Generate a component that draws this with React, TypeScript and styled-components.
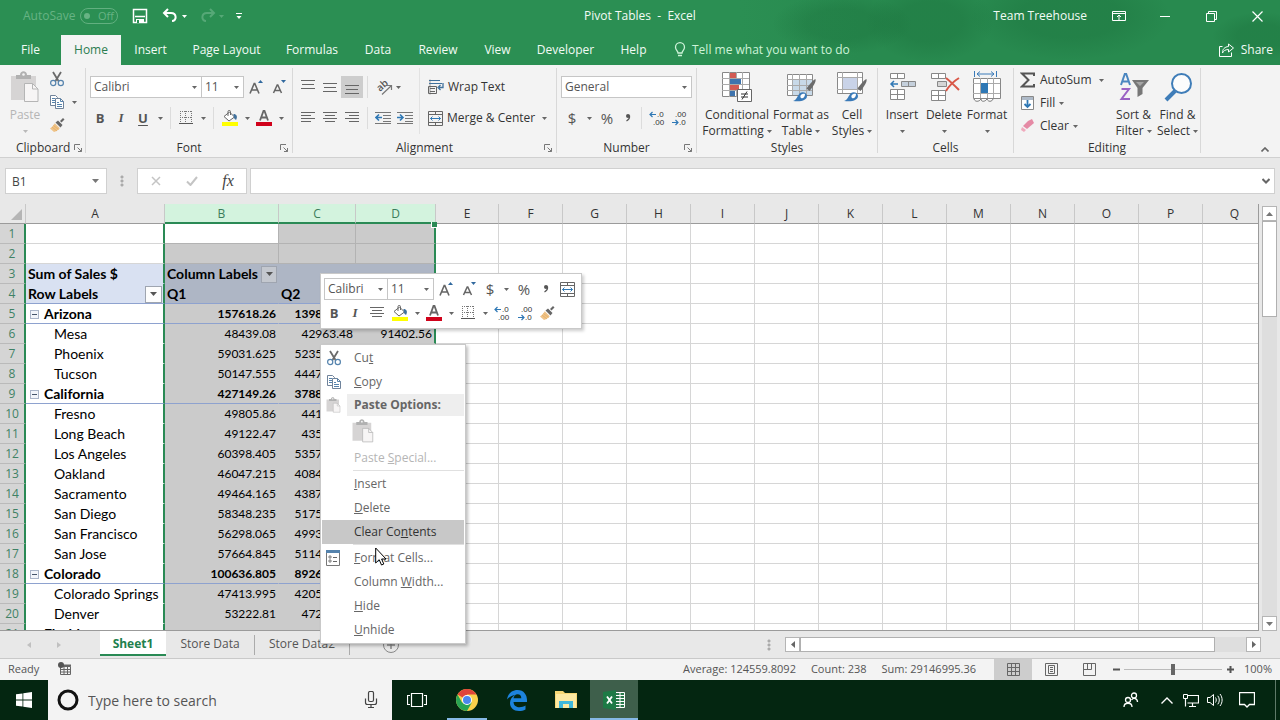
import React from "react";
import styled, { createGlobalStyle, css } from "styled-components";

const UI = `"Open Sans", "Noto Sans", sans-serif`;
const CELL = `Lato, "Open Sans", sans-serif`;

const Global = createGlobalStyle`
  * { box-sizing: border-box; }
  body { margin: 0; font: 12px/16px ${UI}; color: #333; background: #e8e8e8; }
  button, input, select { font: inherit; color: inherit; margin: 0; }
  svg { display: block; flex: none; }
`;

/* ---------- shared parts ---------- */

const Window = styled.div`
  position: relative;
  display: flex;
  flex-direction: column;
  height: 100vh;
  min-height: 480px;
  overflow: hidden;
`;

const plain = css`
  display: flex;
  align-items: center;
  justify-content: center;
  padding: 0;
  border: 0;
  background: none;
  white-space: nowrap;
`;

const IconButton = styled.button<{ $w?: number; $h?: number; $on?: boolean }>`
  ${plain}
  flex: none;
  width: ${(p) => p.$w ?? 22}px;
  height: ${(p) => p.$h ?? 22}px;
  background: ${(p) => (p.$on ? "#cdcdcd" : "none")};
`;

const Spacer = styled.div`
  flex: 1;
`;

type IconProps = { w: number; h: number; vb?: string; children: React.ReactNode };
const Icon = ({ w, h, vb, children }: IconProps) => (
  <svg width={w} height={h} viewBox={vb ?? `0 0 ${w} ${h}`} fill="none" aria-hidden="true">
    {children}
  </svg>
);

const Caret = ({ color = "#666" }: { color?: string }) => (
  <Icon w={5} h={3}>
    <path d="M0 0h5L2.500 3z" fill={color} />
  </Icon>
);

/* ---------- icons ---------- */

const CutIcon = () => (
  <Icon w={16} h={16}>
    <path d="M4 1l5.500 9M12 1L6.500 10" stroke="#6a6a6a" strokeWidth="1.800" />
    <circle cx="4.200" cy="12" r="2.600" stroke="#5583ad" strokeWidth="1.200" />
    <circle cx="11.800" cy="12" r="2.600" stroke="#5583ad" strokeWidth="1.200" />
  </Icon>
);

const CopyIcon = () => (
  <Icon w={16} h={16}>
    <path d="M1.500 1.500h5l2 2v8h-7z" fill="#fff" stroke="#70839a" />
    <path d="M3 4.500h3M3 6.500h3M3 8.500h3" stroke="#5583ad" />
    <path d="M6.500 4.500h5l3 3v7h-8z" fill="#fff" stroke="#70839a" />
    <path d="M11.500 4.500v3h3M8 8.500h2M8 10.500h5M8 12.500h5" stroke="#5583ad" />
  </Icon>
);

const BrushIcon = () => (
  <Icon w={16} h={16}>
    <path d="M11 4l3-3 1.500 1.500-3 3z" fill="#666" />
    <path d="M6.500 5.500l2.500-2 4.500 4.500-2 2.500z" fill="#666" />
    <path d="M5.800 6.200l5 5c-2 2-4 3.500-5.800 3.800L1 11.500c1.800-1.300 3.500-3 4.800-5.300z" fill="#efc388" />
    <path d="M3 10l5 4M4.500 8.500l5 4" stroke="#e3a95b" strokeWidth=".7" />
  </Icon>
);

const PasteIcon = ({ w = 28, h = 32 }: { w?: number; h?: number }) => (
  <Icon w={w} h={h} vb="0 0 28 32">
    <path d="M0 5h25v24H0z" fill="#d6d4d4" />
    <path d="M5 8V4h4c0-5 7-5 7 0h4v4z" fill="#b1b1b1" />
    <circle cx="12.500" cy="3.500" r="1.300" fill="#f3f3f3" />
    <path d="M13.500 12.500h8l5.500 5.500v12.500H13.500z" fill="#f7f5f5" stroke="#b5b5b5" />
    <path d="M21.500 12.500V18H27" stroke="#b5b5b5" />
  </Icon>
);

const GrowIcon = ({ shrink = false }: { shrink?: boolean }) => (
  <Icon w={16} h={16}>
    {shrink ? (
      <path d="M1.500 14L5.200 6h.6L9.500 14M3 11.500h5" stroke="#666" strokeWidth="1.500" />
    ) : (
      <path d="M1 14.500L5.200 4.500h.6l4.200 10M2.800 11h5.500" stroke="#666" strokeWidth="1.600" />
    )}
    {shrink ? <path d="M9 1h5l-2.500 3z" fill="#31699e" /> : <path d="M9 4h5l-2.500-3z" fill="#31699e" />}
  </Icon>
);

const BordersIcon = () => (
  <Icon w={14} h={14}>
    <path d="M1.500 0v12M6.500 0v12M12.500 0v12" stroke="#777" strokeDasharray="1 1" />
    <path d="M1 .5h12M1 6.500h12" stroke="#777" strokeDasharray="1 1" />
    <path d="M0 12.500h14" stroke="#555" />
  </Icon>
);

const FillIcon = () => (
  <Icon w={16} h={16}>
    <path d="M2 6.500L7.500 2l5 5L7 11z" fill="#fff" stroke="#666" />
    <path d="M6 6V1.500C6 0 8.500 0 8.500 1.500V5" stroke="#666" />
    <path d="M11.500 4c3 0 4.500 2.500 2.500 6-1.500-1-2.500-2-2.500-6z" fill="#41719c" />
    <path d="M0 12h16v4H0z" fill="#ff0" />
  </Icon>
);

const FontColorIcon = () => (
  <Icon w={16} h={16}>
    <path d="M4 10.500L7.500 1h1L12 10.500M5 7.500h6" stroke="#666" strokeWidth="1.800" />
    <path d="M0 12h16v4H0z" fill="#d0021b" />
  </Icon>
);

const LinesIcon = ({ ys, kind }: { ys: number[]; kind: "even" | "left" | "center" | "right" }) => (
  <Icon w={14} h={14}>
    {ys.map((y, i) => {
      const short = i % 2 === 1;
      const a = short ? { even: 1, left: 0, center: 2, right: 4 }[kind] : 0;
      const b = short ? { even: 13, left: 10, center: 12, right: 14 }[kind] : 14;
      return <path key={y} d={`M${a} ${y}.5H${b}`} stroke="#666" />;
    })}
  </Icon>
);

const OrientIcon = () => (
  <Icon w={20} h={20}>
    <text transform="translate(7 15) rotate(-42)" fontSize="10" fontWeight="600" fontFamily="Open Sans" fill="#555">
      ab
    </text>
    <path d="M9 17.500L18 9M14 8.500h4.500V13" stroke="#777" strokeWidth="1.200" />
  </Icon>
);

const IndentIcon = ({ out = false }: { out?: boolean }) => (
  <Icon w={16} h={14}>
    <path d="M0 1.500h16M8 4.500h8M8 7.500h8M0 12.500h16M8 10.500h8" stroke="#777" />
    {out ? (
      <path d="M7 6.500H2M4 3.500l-3 3 3 3" stroke="#2f78b5" strokeWidth="1.600" />
    ) : (
      <path d="M0 6.500h5M3 3.500l3 3-3 3" stroke="#2f78b5" strokeWidth="1.600" />
    )}
  </Icon>
);

const WrapIcon = () => (
  <Icon w={16} h={16}>
    <path d="M2 .5v15" stroke="#999" />
    <path d="M1 1.500h11M1 4.500h13" stroke="#41719c" />
    <path d="M.5 7.500h8v7h-8zM2 9.500h5M2 12.500h5" stroke="#666" />
    <path d="M15 4v4.500h-4M12.500 6l-2.500 2.500 2.500 2.500" stroke="#41719c" strokeWidth="1.300" />
  </Icon>
);

const MergeIcon = () => (
  <Icon w={15} h={15}>
    <path d="M.5.500h14v14H.5zM.5 3.500h14M.5 11.500h14M7.500.500v3M7.500 11.500v3" stroke="#666" />
    <path d="M2.500 7.500h10M4.500 5.500l-2 2 2 2M10.500 5.500l2 2-2 2" stroke="#2f78b5" />
  </Icon>
);

const CommaIcon = () => (
  <Icon w={6} h={10}>
    <circle cx="3" cy="3" r="2" fill="#555" />
    <path d="M4.500 2.500c.5 2.500-.5 4-3 5.500" stroke="#555" strokeWidth="1.200" />
  </Icon>
);

const DecimalIcon = ({ less = false }: { less?: boolean }) => (
  <Icon w={18} h={18}>
    <text x={less ? 5 : 9} y="8" fontSize="8" fontFamily="Liberation Sans" fill="#333">
      {less ? ".00" : ".0"}
    </text>
    <text x={less ? 9 : 5} y="16" fontSize="8" fontFamily="Liberation Sans" fill="#333">
      {less ? ".0" : ".00"}
    </text>
    {less ? (
      <path d="M2 13.500h6M5.500 11l2.500 2.500L5.500 16" stroke="#2f78b5" strokeWidth="1.200" />
    ) : (
      <path d="M8 5.500H2M4.500 3L2 5.500 4.500 8" stroke="#2f78b5" strokeWidth="1.200" />
    )}
  </Icon>
);

const ConditionalIcon = () => (
  <Icon w={32} h={32}>
    <path d="M1.500 1.500h27v24h-27z" fill="#fff" stroke="#888" />
    <path d="M1 7.500h27M1 13.500h27M1 19.500h27M8.500 1v25M15.500 1v25M21.500 1v25" stroke="#aaa" />
    <path d="M9 2h6v5H9zM9 14h9v5H9z" fill="#d35b54" />
    <path d="M9 8h11v5H9zM9 20h5v5H9z" fill="#3f74ae" />
    <path d="M16.500 18.500h14v12h-14z" fill="#fff" stroke="#666" />
    <path d="M20 23h7M20 26h7M26 20.500l-5 8" stroke="#333" />
  </Icon>
);

const TableBrush = ({ cell = false }: { cell?: boolean }) => (
  <Icon w={32} h={32}>
    <path d={cell ? "M1.500 1.500h25v21h-25z" : "M2.500 3.500h25v21h-25z"} fill="#fff" stroke="#888" />
    {cell ? (
      <path d="M6 6h16v12H6z" fill="#c9d3e8" />
    ) : (
      <path d="M8 9h19v15H8z" fill="#c8d9e8" />
    )}
    <path
      d={cell ? "M1 6.500h25M1 18.500h25M6.500 1v21M21.500 1v21" : "M2 8.500h25M2 14.500h25M2 19.500h25M7.500 3v21M14.500 3v21M21.500 3v21"}
      stroke="#aaa"
    />
    <path d="M30.500 8c.8 3-2 7-6 12l-3-2.500C25 13 28 9 30.500 8z" fill="#6b6b6b" />
    <path d="M8 30c4-1 4-5 7-8 3-2 7 0 7 3 0 4-5 6-14 5z" fill="#3a7ab8" />
    <path d="M16 27c-2-2 1-5 4-4 0 3-2 5-4 4z" fill="#fff" />
  </Icon>
);

const InsertIcon = () => (
  <Icon w={32} h={32}>
    <path d="M4.500 2.500h14v5h-14zM4.500 18.500h14v10h-14zM4.500 23.500h14M11.500 18.500v10M11.500 2.500v5" fill="#fff" stroke="#888" />
    <path d="M15.500 10.500h14v5h-14zM22.500 10.500v5" fill="#c5d0dc" stroke="#888" />
    <path d="M12 13H5M8 10l-3 3 3 3" stroke="#2f78b5" strokeWidth="1.500" />
  </Icon>
);

const DeleteIcon = () => (
  <Icon w={32} h={32}>
    <path d="M3.500 2.500h14v5h-14zM3.500 19.500h14v10h-14zM3.500 24.500h14M10.500 19.500v10M10.500 2.500v5" fill="#fff" stroke="#888" />
    <path d="M9.500 10.500h9v5h-9z" fill="#d5d5d5" stroke="#888" />
    <path d="M18 7c5 4 9 8 13 12M31 7c-5 3-10 8-13 13" stroke="#d95848" strokeWidth="2" />
  </Icon>
);

const FormatIcon = () => (
  <Icon w={30} h={32}>
    <path d="M2.500 0v6M24.500 0v6M5 3h17M8 .5L5 3l3 2.500M19 .5L22 3l-3 2.500" stroke="#3a7ab8" />
    <path d="M1.500 7.500h27v20h-27z" fill="#fff" stroke="#888" />
    <path d="M1 12.500h27M1 22.500h27M8.500 7v20M15.500 7v20M21.500 7v20" stroke="#aaa" />
    <path d="M9 12h7v10H9z" fill="#2f78b5" />
    <path d="M2 28c1 3 5 3 7 0 0 3 4 3 6 0 1 3 5 3 6 0" fill="#fff" stroke="#777" />
  </Icon>
);

const SortIcon = () => (
  <Icon w={30} h={32}>
    <path d="M2 14L5.800 3h1.400L11 14M3.200 10.500h6.600" stroke="#4a86c0" strokeWidth="2" />
    <path d="M2.500 18h7.500L2.500 28H11" stroke="#9a62c4" strokeWidth="2" />
    <path d="M13 9h17l-6.500 8v6l-5 3v-9z" fill="#777" />
    <path d="M17 11h8l-4 4z" fill="#a5a5a5" />
  </Icon>
);

const FindIcon = () => (
  <Icon w={30} h={32}>
    <path d="M3 29l9-9" stroke="#3f7db8" strokeWidth="4" />
    <circle cx="18.500" cy="12.500" r="9.500" fill="#fcfcfc" stroke="#3f7db8" strokeWidth="2" />
  </Icon>
);

/* ---------- title bar and tabs ---------- */

const Top = styled.header`
  flex: none;
  color: #f2fbf5;
  background:
    radial-gradient(ellipse 70px 30px at 842px 24px, rgba(20, 100, 50, 0.24) 50%, transparent 100%),
    radial-gradient(ellipse 64px 40px at 930px 22px, rgba(20, 100, 50, 0.24) 50%, transparent 100%),
    radial-gradient(ellipse 100px 44px at 1070px 16px, rgba(20, 100, 50, 0.24) 50%, transparent 100%),
    radial-gradient(ellipse 50px 24px at 1262px 36px, rgba(20, 100, 50, 0.24) 50%, transparent 100%),
    linear-gradient(90deg, #2b8f53 0, #2b8f53 740px, #288a4f 860px, #288a4f 100%);
`;

const TitleBar = styled.div`
  display: grid;
  grid-template-columns: 1fr auto 1fr;
  align-items: center;
  height: 35px;
  padding-bottom: 3px;
`;

const QuickBar = styled.div`
  display: flex;
  align-items: center;
  padding-left: 23px;
`;

const AutoSave = styled.span`
  width: 57px;
  color: #67b384;
`;

const Toggle = styled.button`
  ${plain}
  gap: 8px;
  width: 38px;
  height: 16px;
  margin-right: 9px;
  border: 1px solid #62b080;
  border-radius: 8px;
  color: #67b384;
  font-size: 11px;
`;

const Dot = styled.i`
  width: 6px;
  height: 6px;
  border-radius: 50%;
  background: #67b384;
`;

const Title = styled.h1`
  margin: 0;
  font: inherit;
  white-space: pre;
`;

const WindowBar = styled.div`
  display: flex;
  align-items: center;
  justify-content: flex-end;
`;

const User = styled.span`
  margin-right: 9px;
`;

const TabBar = styled.nav`
  display: flex;
  align-items: stretch;
  height: 30px;
`;

const Tab = styled.button<{ $w: number; $on?: boolean }>`
  ${plain}
  width: ${(p) => p.$w}px;
  ${(p) => p.$on && "background: #f3f3f3; color: #2b7d50;"}
`;

const TabAction = styled.button<{ $dim?: boolean }>`
  ${plain}
  gap: 6px;
  margin-left: 14px;
  margin-right: 7px;
  color: ${(p) => (p.$dim ? "#cdf3d8" : "#f2fbf5")};
`;

const tabs: [string, number][] = [
  ["File", 61], ["Home", 60], ["Insert", 59], ["Page Layout", 93], ["Formulas", 78], ["Data", 54],
  ["Review", 66], ["View", 53], ["Developer", 83], ["Help", 53],
];

const Header = () => (
  <Top>
    <TitleBar>
      <QuickBar>
        <AutoSave>AutoSave</AutoSave>
        <Toggle aria-label="AutoSave">
          <Dot />
          Off
        </Toggle>
        <IconButton $w={26} aria-label="Save">
          <Icon w={16} h={16}>
            <path d="M1.500 1.500h13v13h-13z" stroke="#fff" strokeWidth="1.500" />
            <path d="M3 8.500h10" stroke="#fff" strokeWidth="1.500" />
            <path d="M4 11h8v4H4z" fill="#fff" />
            <path d="M5 12h2v3H5z" fill="#2b8f53" />
          </Icon>
        </IconButton>
        <IconButton $w={42} aria-label="Undo">
          <Icon w={25} h={16}>
            <path d="M2 5h7c6 0 6 8 1 8M6 1L2 5l4 4" stroke="#fff" strokeWidth="2" />
            <path d="M20 7h5l-2.500 3z" fill="#fff" />
          </Icon>
        </IconButton>
        <IconButton $w={32} aria-label="Redo">
          <Icon w={25} h={16}>
            <path d="M14 5H8c-6 0-6 8-1 8M11 1l4 4-4 4" stroke="#56a877" strokeWidth="2" />
            <path d="M20 7h5l-2.500 3z" fill="#56a877" />
          </Icon>
        </IconButton>
        <IconButton $w={24} aria-label="Customize">
          <Icon w={8} h={8}>
            <path d="M1 1.500h6" stroke="#fff" />
            <path d="M1.500 4h5L4 7z" fill="#fff" />
          </Icon>
        </IconButton>
      </QuickBar>
      <Title>{"Pivot Tables  -  Excel"}</Title>
      <WindowBar>
        <User>Team Treehouse</User>
        <IconButton $w={46} aria-label="Ribbon options">
          <Icon w={14} h={12}>
            <path d="M.5 1.500h13v9H.5zM.5 3.500h13M7 10V5M5 7l2-2 2 2" stroke="#fff" />
          </Icon>
        </IconButton>
        <IconButton $w={46} aria-label="Minimize">
          <Icon w={10} h={10}>
            <path d="M0 5.500h10" stroke="#fff" />
          </Icon>
        </IconButton>
        <IconButton $w={46} aria-label="Restore">
          <Icon w={11} h={11}>
            <path d="M.5 2.500h8v8h-8zM2.500 2.500v-2h8v8h-2" stroke="#fff" />
          </Icon>
        </IconButton>
        <IconButton $w={46} aria-label="Close">
          <Icon w={11} h={11}>
            <path d="M.5.500l10 10M10.500.500l-10 10" stroke="#fff" strokeWidth="1.200" />
          </Icon>
        </IconButton>
      </WindowBar>
    </TitleBar>
    <TabBar>
      {tabs.map(([name, w]) => (
        <Tab key={name} $w={w} $on={name === "Home"}>
          {name}
        </Tab>
      ))}
      <TabAction $dim>
        <Icon w={12} h={16}>
          <path d="M4 11C4 9 1.500 8 1.500 5.200a4.500 4.500 0 019 0C10.500 8 8 9 8 11zM4 13.500h4" stroke="#cdf3d8" strokeWidth="1.300" />
        </Icon>
        Tell me what you want to do
      </TabAction>
      <Spacer />
      <TabAction>
        <Icon w={16} h={14}>
          <path d="M3.500 3.500h-3v10h12v-4" stroke="#fff" />
          <path d="M9.500 1l5 4-5 4V6.500C6 6.500 4.500 8 3.500 10c0-4 2-6 6-6.500z" stroke="#fff" />
        </Icon>
        Share
      </TabAction>
    </TabBar>
  </Top>
);

/* ---------- ribbon ---------- */

const RibbonBar = styled.section`
  display: flex;
  flex: none;
  height: 93px;
  padding-top: 3px;
  background: #f3f3f3;
  border-bottom: 1px solid #d0d0d0;
`;

const GroupBox = styled.div<{ $w: number }>`
  display: flex;
  flex-direction: column;
  flex: none;
  width: ${(p) => p.$w}px;
  border-right: 1px solid #d8d8d8;
  margin-bottom: 4px;
`;

const GroupBody = styled.div<{ $pad?: number }>`
  display: flex;
  flex: none;
  height: 72px;
  padding-left: ${(p) => p.$pad ?? 4}px;
`;

const GroupFoot = styled.div`
  display: grid;
  grid-template-columns: 16px 1fr 16px;
  align-items: center;
  height: 18px;
  text-align: center;
`;

const Launcher = () => (
  <IconButton $w={16} $h={16} aria-label="More options">
    <Icon w={8} h={8}>
      <path d="M.5 6V.5H6M3.500 3.500l4 4M7.500 4v3.500H4" stroke="#777" />
    </Icon>
  </IconButton>
);

const Group = ({ name, w, pad, launch, children }: { name: string; w: number; pad?: number; launch?: boolean; children: React.ReactNode }) => (
  <GroupBox $w={w}>
    <GroupBody $pad={pad}>{children}</GroupBody>
    <GroupFoot>
      <span />
      <span>{name}</span>
      {launch && <Launcher />}
    </GroupFoot>
  </GroupBox>
);

const Stack = styled.div<{ $gap?: number; $top?: number }>`
  display: flex;
  flex-direction: column;
  align-items: flex-start;
  gap: ${(p) => p.$gap ?? 9}px;
  padding-top: ${(p) => p.$top ?? 8}px;
`;

const Line = styled.div`
  display: flex;
  align-items: center;
  height: 22px;
`;

const Rule = styled.i<{ $m?: number }>`
  width: 1px;
  height: 22px;
  margin: 0 ${(p) => p.$m ?? 4}px;
  background: #dcdcdc;
`;

const TallRule = styled.i`
  width: 1px;
  height: 66px;
  margin: 0 8px 0 3px;
  background: #e2e2e2;
`;

const SelectBox = styled.div<{ $w: number }>`
  position: relative;
  width: ${(p) => p.$w}px;
  height: 22px;
  & + & { margin-left: -1px; }
  & > svg { position: absolute; right: 5px; top: 10px; pointer-events: none; }
`;

const Select = styled.select`
  appearance: none;
  width: 100%;
  height: 100%;
  padding: 0 3px;
  border: 1px solid #c6c6c6;
  border-radius: 0;
  background: #fff;
  color: #555;
`;

const Drop = ({ value, w, label }: { value: string; w: number; label: string }) => (
  <SelectBox $w={w}>
    <Select aria-label={label} defaultValue={value}>
      <option>{value}</option>
    </Select>
    <Caret />
  </SelectBox>
);

const Big = styled.button<{ $w: number; $off?: boolean }>`
  display: flex;
  flex-direction: column;
  align-items: center;
  flex: none;
  width: ${(p) => p.$w}px;
  padding: 3px 0 0;
  border: 0;
  background: none;
  white-space: nowrap;
  color: ${(p) => (p.$off ? "#b5b5b5" : "#333")};
`;

const BigText = styled.span`
  display: flex;
  align-items: center;
  justify-content: center;
  gap: 3px;
  height: 16px;
`;

const BigTop = styled.span`
  height: 36px;
`;

const Small = styled.button`
  ${plain}
  gap: 4px;
  height: 22px;
  color: #333;
`;

const Mark = styled.b<{ $italic?: boolean; $under?: boolean }>`
  font-size: 13px;
  font-style: ${(p) => (p.$italic ? "italic" : "normal")};
  font-family: ${(p) => (p.$italic ? `"Liberation Serif", serif` : UI)};
  text-decoration: ${(p) => (p.$under ? "underline" : "none")};
  text-underline-offset: 2px;
  color: #555;
`;

const Sign = styled.span`
  font-size: 15px;
  color: #555;
`;

const BigTool = ({ w, icon, a, b, off }: { w: number; icon: React.ReactNode; a: string; b?: string; off?: boolean }) => (
  <Big $w={w} $off={off}>
    <BigTop>{icon}</BigTop>
    <BigText>{a}</BigText>
    <BigText>
      {b}
      <Caret color={off ? "#b9b9b9" : "#666"} />
    </BigText>
  </Big>
);

const Arrow = ({ w = 12, label }: { w?: number; label: string }) => (
  <IconButton $w={w} aria-label={label}>
    <Caret />
  </IconButton>
);

const Ribbon = () => (
  <RibbonBar>
    <Group name="Clipboard" w={86} launch>
      <BigTool w={42} off icon={<PasteIcon />} a="Paste" />
      <Stack $gap={1} $top={0}>
        <IconButton aria-label="Cut"><CutIcon /></IconButton>
        <Line>
          <IconButton aria-label="Copy"><CopyIcon /></IconButton>
          <Arrow label="Copy options" />
        </Line>
        <IconButton aria-label="Format painter"><BrushIcon /></IconButton>
      </Stack>
    </Group>
    <Group name="Font" w={207} launch>
      <Stack>
        <Line>
          <Drop value="Calibri" w={112} label="Font" />
          <Drop value="11" w={43} label="Font size" />
          <IconButton $w={25} aria-label="Grow font"><GrowIcon /></IconButton>
          <IconButton aria-label="Shrink font"><GrowIcon shrink /></IconButton>
        </Line>
        <Line>
          <IconButton $w={20} aria-label="Bold"><Mark>B</Mark></IconButton>
          <IconButton aria-label="Italic"><Mark $italic>I</Mark></IconButton>
          <IconButton aria-label="Underline"><Mark $under>U</Mark></IconButton>
          <Arrow label="Underline options" />
          <Rule />
          <IconButton aria-label="Borders"><BordersIcon /></IconButton>
          <Arrow label="Border options" />
          <Rule />
          <IconButton $w={24} aria-label="Fill color"><FillIcon /></IconButton>
          <Arrow w={10} label="Fill options" />
          <IconButton $w={24} aria-label="Font color"><FontColorIcon /></IconButton>
          <Arrow w={10} label="Font color options" />
        </Line>
      </Stack>
    </Group>
    <Group name="Alignment" w={264} launch>
      <Stack>
        <Line>
          <IconButton aria-label="Top align"><LinesIcon ys={[0, 4, 8]} kind="even" /></IconButton>
          <IconButton aria-label="Middle align"><LinesIcon ys={[3, 7, 11]} kind="even" /></IconButton>
          <IconButton $on aria-label="Bottom align"><LinesIcon ys={[5, 9, 13]} kind="even" /></IconButton>
          <Rule />
          <IconButton aria-label="Orientation"><OrientIcon /></IconButton>
          <Arrow w={8} label="Orientation options" />
        </Line>
        <Line>
          <IconButton aria-label="Align left"><LinesIcon ys={[1, 4, 7, 10]} kind="left" /></IconButton>
          <IconButton aria-label="Center"><LinesIcon ys={[1, 4, 7, 10]} kind="center" /></IconButton>
          <IconButton aria-label="Align right"><LinesIcon ys={[1, 4, 7, 10]} kind="right" /></IconButton>
          <Rule />
          <IconButton aria-label="Decrease indent"><IndentIcon out /></IconButton>
          <IconButton aria-label="Increase indent"><IndentIcon /></IconButton>
        </Line>
      </Stack>
      <TallRule />
      <Stack>
        <Small><WrapIcon />Wrap Text</Small>
        <Line>
          <Small><MergeIcon />Merge &amp; Center</Small>
          <Arrow w={18} label="Merge options" />
        </Line>
      </Stack>
    </Group>
    <Group name="Number" w={140} launch>
      <Stack>
        <Drop value="General" w={131} label="Number format" />
        <Line>
          <IconButton aria-label="Currency"><Sign>$</Sign></IconButton>
          <Arrow label="Currency options" />
          <IconButton $w={24} aria-label="Percent"><Sign>%</Sign></IconButton>
          <IconButton $w={18} aria-label="Comma style"><CommaIcon /></IconButton>
          <Rule />
          <IconButton aria-label="Increase decimal"><DecimalIcon /></IconButton>
          <IconButton aria-label="Decrease decimal"><DecimalIcon less /></IconButton>
        </Line>
      </Stack>
    </Group>
    <Group name="Styles" w={181} pad={5}>
      <BigTool w={70} icon={<ConditionalIcon />} a="Conditional" b="Formatting" />
      <BigTool w={58} icon={<TableBrush />} a="Format as" b="Table" />
      <BigTool w={44} icon={<TableBrush cell />} a="Cell" b="Styles" />
    </Group>
    <Group name="Cells" w={136} pad={3}>
      <BigTool w={42} icon={<InsertIcon />} a="Insert" />
      <BigTool w={42} icon={<DeleteIcon />} a="Delete" />
      <BigTool w={44} icon={<FormatIcon />} a="Format" />
    </Group>
    <Group name="Editing" w={187} pad={6}>
      <Stack $gap={1} $top={1}>
        <Line>
          <Small>
            <Icon w={16} h={16}>
              <path d="M14 4V1.500H2L8.500 8 2 14.500h12V12" stroke="#555" strokeWidth="2" />
            </Icon>
            AutoSum
          </Small>
          <Arrow w={20} label="AutoSum options" />
        </Line>
        <Line>
          <Small>
            <Icon w={16} h={16}>
              <path d="M1.500 1.500h12v13h-12z" fill="#fff" stroke="#888" />
              <path d="M2 2h11v3H2z" fill="#aebac8" />
              <path d="M7.500 5v7M4.500 9l3 3 3-3" stroke="#2f78b5" strokeWidth="1.800" />
            </Icon>
            Fill
            <Caret />
          </Small>
        </Line>
        <Line>
          <Small>
            <Icon w={16} h={16}>
              <path d="M8 3l4-2 2 4-7 6-4-3z" fill="#e58aa5" />
              <path d="M2 9l4 3-2 2-3-2z" fill="#f0aabd" />
            </Icon>
            Clear
            <Caret />
          </Small>
        </Line>
      </Stack>
      <Spacer />
      <BigTool w={44} icon={<SortIcon />} a="Sort &amp;" b="Filter" />
      <BigTool w={44} icon={<FindIcon />} a="Find &amp;" b="Select" />
      <FootGap />
    </Group>
    <Spacer />
    <Collapse aria-label="Collapse the ribbon">
      <Icon w={8} h={5}>
        <path d="M.5 4.500L4 1l3.500 3.500" stroke="#666" strokeWidth="1.600" />
      </Icon>
    </Collapse>
  </RibbonBar>
);

const FootGap = styled.i`
  width: 5px;
`;

const Collapse = styled.button`
  ${plain}
  align-self: flex-end;
  width: 30px;
  height: 16px;
`;

/* ---------- formula bar ---------- */

const FormulaBar = styled.div`
  display: flex;
  flex: none;
  height: 46px;
  padding: 10px 5px;
  gap: 3px;
`;

const NameBox = styled.div`
  display: flex;
  align-items: center;
  width: 102px;
  padding-right: 7px;
  border: 1px solid #d0d0d0;
  background: #fff;
`;

const PlainInput = styled.input`
  flex: 1;
  min-width: 0;
  height: 100%;
  padding: 0 6px;
  border: 0;
  outline: 0;
  background: none;
  color: #444;
`;

const Dots = styled.i<{ $w: number }>`
  width: ${(p) => p.$w}px;
  height: 12px;
  align-self: center;
  background: radial-gradient(circle, #aaa 1px, transparent 2px) center / 4px 4px repeat-y;
`;

const FormulaTools = styled.div`
  display: flex;
  align-items: center;
  justify-content: space-around;
  width: 110px;
  border: 1px solid #d0d0d0;
  background: #fff;
`;

const FormulaField = styled.div`
  display: flex;
  align-items: center;
  flex: 1;
  padding-right: 4px;
  border: 1px solid #d0d0d0;
  background: #fff;
`;

const Fx = styled.span`
  font: italic 16px "Liberation Serif", serif;
  color: #444;
`;

const Formula = () => (
  <FormulaBar>
    <NameBox>
      <PlainInput aria-label="Name box" defaultValue="B1" />
      <Icon w={7} h={4}>
        <path d="M0 0h7L3.500 4z" fill="#777" />
      </Icon>
    </NameBox>
    <Dots $w={24} />
    <FormulaTools>
      <IconButton aria-label="Cancel">
        <Icon w={10} h={10}><path d="M1 1l8 8M9 1L1 9" stroke="#c4c4c4" strokeWidth="1.500" /></Icon>
      </IconButton>
      <IconButton aria-label="Enter">
        <Icon w={12} h={10}><path d="M1 5.500L4.500 9 11 1" stroke="#c4c4c4" strokeWidth="2" /></Icon>
      </IconButton>
      <IconButton aria-label="Insert function"><Fx>fx</Fx></IconButton>
    </FormulaTools>
    <FormulaField>
      <PlainInput aria-label="Formula" />
      <Icon w={8} h={6}><path d="M.5 1L4 4.500 7.500 1" stroke="#666" strokeWidth="2" /></Icon>
    </FormulaField>
  </FormulaBar>
);

/* ---------- worksheet ---------- */

const Work = styled.main`
  display: flex;
  flex: 1;
  min-height: 0;
`;

const SheetClip = styled.div`
  flex: 1;
  min-width: 0;
  overflow: hidden;
  border-right: 1px solid #9b9b9b;
  border-bottom: 1px solid #9b9b9b;
`;

const Sheet = styled.table`
  table-layout: fixed;
  width: 1267px;
  border-collapse: separate;
  border-spacing: 0;
  background: #fff;
`;

const ColHead = styled.th<{ $sel?: boolean }>`
  height: 20px;
  padding: ${(p) => (p.$sel ? 2 : 1)}px 0 0;
  font-weight: 400;
  line-height: 16px;
  color: ${(p) => (p.$sel ? "#3b7d5b" : "#333")};
  background: ${(p) => (p.$sel ? "#d3f3de" : "#e8e8e8")};
  border-right: 1px solid #c8c8c8;
  border-bottom: ${(p) => (p.$sel ? "2px solid #2a8a55" : "1px solid #9b9b9b")};
`;

const Corner = styled.td`
  padding: 0 3px 3px 0;
  background: #e8e8e8;
  border-right: 1px solid #c8c8c8;
  border-bottom: 1px solid #9b9b9b;
  vertical-align: bottom;
  & > svg { margin-left: auto; }
`;

const RowHead = styled.th`
  height: 20px;
  padding: 1px 0 0;
  font-weight: 400;
  line-height: 18px;
  color: #3f8265;
  background: #d5d5d5;
  border-right: 2px solid #2a8a55;
  border-bottom: 1px solid #bababa;
`;

type Kind = "blank" | "head" | "state" | "city";

const fillColor = (sel: boolean, kind: Kind) => {
  if (kind === "head") return sel ? "#aeb6c5" : "#d9e1f2";
  return sel ? "#cbcbcb" : "#fff";
};

const lineColor = (sel: boolean, kind: Kind, rule?: boolean) => {
  if (rule) return "#8ea2cf";
  if (kind === "blank") return sel ? "#b3b3b3" : "#d6d6d6";
  return fillColor(sel, kind);
};

const Cell = styled.td<{ $kind: Kind; $sel?: boolean; $rule?: boolean; $edge?: boolean; $active?: boolean }>`
  position: relative;
  height: 20px;
  padding: 0;
  background: ${(p) => (p.$active ? "#fff" : fillColor(!!p.$sel, p.$kind))};
  border-bottom: 1px solid ${(p) => lineColor(!!p.$sel, p.$kind, p.$rule)};
  border-right: ${(p) =>
    p.$edge ? "2px solid #2a8a55" : `1px solid ${lineColor(!!p.$sel, p.$kind)}`};
`;

const Handle = styled.i`
  position: absolute;
  top: -2px;
  right: -3px;
  width: 6px;
  height: 6px;
  background: #2a8a55;
  border: 1px solid #fff;
  border-top: 0;
  border-right: 0;
`;

const EmptyCell = styled.td`
  height: 20px;
  padding: 0;
  border-right: 1px solid #d6d6d6;
  border-bottom: 1px solid #d6d6d6;
`;

const Value = styled.div<{ $bold?: boolean; $number?: boolean; $indent?: number }>`
  display: flex;
  align-items: center;
  justify-content: ${(p) => (p.$number ? "flex-end" : "flex-start")};
  height: 19px;
  padding: 1px 2px 0 ${(p) => p.$indent ?? 1}px;
  font-family: ${CELL};
  font-size: ${(p) => (p.$number ? 12 : 14)}px;
  font-weight: ${(p) => (p.$bold ? 700 : 400)};
  line-height: 18px;
  white-space: nowrap;
  color: #000;
`;

const FilterButton = styled.button<{ $dark?: boolean; $end?: boolean }>`
  ${plain}
  width: 17px;
  height: 17px;
  margin-left: ${(p) => (p.$end ? "auto" : "3px")};
  margin-right: -1px;
  border: 1px solid #9fa5b0;
  background: ${(p) => (p.$dark ? "#c4c8cf" : "#fdfdfd")};
`;

const Fold = styled.button`
  ${plain}
  width: 9px;
  height: 9px;
  margin-right: 5px;
  border: 1px solid #a9b4c8;
  background: #f1f4fa;
`;

const FilterArrow = () => (
  <Icon w={7} h={4}>
    <path d="M0 0h7L3.500 4z" fill="#555" />
  </Icon>
);

type Row = { kind: Kind; a?: string; b?: string; c?: string; d?: string };
const rows: Row[] = [
  { kind: "blank" },
  { kind: "blank" },
  { kind: "head", a: "Sum of Sales $", b: "Column Labels" },
  { kind: "head", a: "Row Labels", b: "Q1", c: "Q2" },
  { kind: "state", a: "Arizona", b: "157618.26", c: "139816.33" },
  { kind: "city", a: "Mesa", b: "48439.08", c: "42963.48", d: "91402.56" },
  { kind: "city", a: "Phoenix", b: "59031.625", c: "52357.165" },
  { kind: "city", a: "Tucson", b: "50147.555", c: "44475.685" },
  { kind: "state", a: "California", b: "427149.26", c: "378854.98" },
  { kind: "city", a: "Fresno", b: "49805.86", c: "44174.52" },
  { kind: "city", a: "Long Beach", b: "49122.47", c: "43568.31" },
  { kind: "city", a: "Los Angeles", b: "60398.405", c: "53570.115" },
  { kind: "city", a: "Oakland", b: "46047.215", c: "40841.105" },
  { kind: "city", a: "Sacramento", b: "49464.165", c: "43871.745" },
  { kind: "city", a: "San Diego", b: "58348.235", c: "51751.365" },
  { kind: "city", a: "San Francisco", b: "56298.065", c: "49932.955" },
  { kind: "city", a: "San Jose", b: "57664.845", c: "51144.865" },
  { kind: "state", a: "Colorado", b: "100636.805", c: "89260.435" },
  { kind: "city", a: "Colorado Springs", b: "47413.995", c: "42053.225" },
  { kind: "city", a: "Denver", b: "53222.81", c: "47207.21" },
  { kind: "state", a: "Florida" },
];
const columns = "ABCDEFGHIJKLMNOPQ".split("");
const widths = [139, 114, 77, 80, 63];

const SheetRow = ({ row, n }: { row: Row; n: number }) => {
  const { kind } = row;
  const bold = kind === "head" || kind === "state";
  const rule = n === 4 || kind === "state";
  const number = kind !== "head";
  return (
    <tr>
      <RowHead scope="row">{n}</RowHead>
      <Cell $kind={kind} $rule={rule} $edge>
        <Value $bold={bold} $indent={kind === "city" ? 28 : kind === "state" ? 4 : 2}>
          {kind === "state" && (
            <Fold aria-label={`Collapse ${row.a}`}>
              <Icon w={5} h={1}><path d="M0 .5h5" stroke="#44546a" /></Icon>
            </Fold>
          )}
          {row.a}
          {n === 4 && <FilterButton $end aria-label="Filter rows"><FilterArrow /></FilterButton>}
        </Value>
      </Cell>
      <Cell $kind={kind} $sel $rule={rule} $active={n === 1}>
        <Value $bold={bold} $number={number} $indent={2}>
          {row.b}
          {n === 3 && <FilterButton $dark aria-label="Filter columns"><FilterArrow /></FilterButton>}
        </Value>
      </Cell>
      <Cell $kind={kind} $sel $rule={rule}>
        <Value $bold={bold} $number={number} $indent={2}>{row.c}</Value>
      </Cell>
      <Cell $kind={kind} $sel $rule={rule} $edge>
        <Value $bold={bold} $number={number}>{row.d}</Value>
        {n === 1 && <Handle />}
      </Cell>
      {columns.slice(4).map((c) => <EmptyCell key={c} />)}
    </tr>
  );
};

const VScroll = styled.div`
  display: flex;
  flex-direction: column;
  flex: none;
  width: 21px;
  padding: 2px 3px 0 3px;
`;

const ScrollButton = styled.button`
  ${plain}
  flex: none;
  width: 15px;
  height: 15px;
  border: 1px solid #b5b5b5;
  background: #fff;
`;

const VThumb = styled.div`
  height: 96px;
  border: 1px solid #b0b0b0;
  background: #fff;
`;

const Track = styled.div`
  flex: 1;
  background: #dedede;
`;

const Grid = () => (
  <Work>
    <SheetClip>
      <Sheet>
        <colgroup>
          <col width={26} />
          {columns.map((c, i) => <col key={c} width={widths[i] ?? 64} />)}
        </colgroup>
        <thead>
          <tr>
            <Corner>
              <Icon w={11} h={11}><path d="M11 0v11H0z" fill="#b5b5b5" /></Icon>
            </Corner>
            {columns.map((c) => (
              <ColHead key={c} scope="col" $sel={"BCD".includes(c)}>{c}</ColHead>
            ))}
          </tr>
        </thead>
        <tbody>
          {rows.map((row, i) => <SheetRow key={i} row={row} n={i + 1} />)}
        </tbody>
      </Sheet>
    </SheetClip>
    <VScroll>
      <ScrollButton aria-label="Scroll up">
        <Icon w={7} h={4}><path d="M0 4h7L3.500 0z" fill="#777" /></Icon>
      </ScrollButton>
      <VThumb />
      <Track />
      <ScrollButton aria-label="Scroll down">
        <Icon w={7} h={4}><path d="M0 0h7L3.500 4z" fill="#777" /></Icon>
      </ScrollButton>
    </VScroll>
  </Work>
);

/* ---------- sheet tabs and status bar ---------- */

const SheetBar = styled.div`
  display: flex;
  align-items: center;
  flex: none;
  height: 27px;
`;

const SheetNav = styled.div`
  display: flex;
  gap: 26px;
  width: 100px;
  padding-left: 27px;
`;

const SheetTab = styled.button<{ $w: number; $on?: boolean }>`
  ${plain}
  align-self: flex-start;
  width: ${(p) => p.$w}px;
  height: 25px;
  padding-top: 2px;
  color: #555;
  border-bottom: 2px solid transparent;
  ${(p) => p.$on && "background: #fff; color: #21804d; font-weight: 700; border-color: #2a8a55;"}
`;

const TabRule = styled.i`
  width: 1px;
  height: 20px;
  background: #ababab;
`;

const HThumb = styled.div`
  flex: 1;
  height: 15px;
  border: 1px solid #b0b0b0;
  background: #fff;
`;

const HScroll = styled.div`
  display: flex;
  flex: none;
  width: 476px;
  margin-right: 19px;
  margin-left: 10px;
`;

const HTrack = styled.div`
  width: 31px;
  background: #dedede;
`;

const Tabs = () => (
  <SheetBar>
    <SheetNav>
      <Icon w={4} h={6}><path d="M4 0v6L0 3z" fill="#c0c0c0" /></Icon>
      <Icon w={4} h={6}><path d="M0 0v6l4-3z" fill="#c0c0c0" /></Icon>
    </SheetNav>
    <SheetTab $w={66} $on>Sheet1</SheetTab>
    <SheetTab $w={88}>Store Data</SheetTab>
    <TabRule />
    <SheetTab $w={94}>Store Data2</SheetTab>
    <TabRule />
    <IconButton $w={82} aria-label="New sheet">
      <Icon w={16} h={16}>
        <circle cx="8" cy="8" r="7.500" stroke="#888" />
        <path d="M8 4v8M4 8h8" stroke="#888" strokeWidth="1.500" />
      </Icon>
    </IconButton>
    <Spacer />
    <Dots $w={12} />
    <HScroll>
      <ScrollButton aria-label="Scroll left">
        <Icon w={4} h={7}><path d="M4 0v7L0 3.500z" fill="#666" /></Icon>
      </ScrollButton>
      <HThumb />
      <HTrack />
      <ScrollButton aria-label="Scroll right">
        <Icon w={4} h={7}><path d="M0 0v7l4-3.500z" fill="#666" /></Icon>
      </ScrollButton>
    </HScroll>
  </SheetBar>
);

const Status = styled.footer`
  display: flex;
  align-items: center;
  flex: none;
  height: 22px;
  padding: 0 8px 1px;
  border-top: 1px solid #c9c9c9;
  background: #f3f3f3;
  color: #555;
  font-size: 11px;
`;

const StatusIcon = styled.div`
  margin-left: 19px;
`;

const Stats = styled.div`
  display: flex;
  gap: 15px;
  margin-right: 18px;
`;

const Slider = styled.input`
  appearance: none;
  width: 98px;
  height: 12px;
  background: linear-gradient(#bbb, #bbb) center / 100% 1px no-repeat;
  &::-webkit-slider-thumb {
    appearance: none;
    width: 4px;
    height: 11px;
    background: #666;
  }
`;

const ZoomValue = styled.span`
  width: 34px;
  text-align: right;
`;

const StatusBar = () => (
  <Status>
    Ready
    <StatusIcon>
      <Icon w={14} h={14}>
        <path d="M2.500 4.500h10v8h-10zM2.500 7.500h10M2.500 10h10M6 5v7M9.500 5v7" stroke="#666" />
        <path d="M5 2.500h8v2H5z" fill="#666" />
        <circle cx="3" cy="3" r="3" fill="#555" />
      </Icon>
    </StatusIcon>
    <Spacer />
    <Stats>
      <span>Average: 124559.8092</span>
      <span>Count: 238</span>
      <span>Sum: 29146995.36</span>
    </Stats>
    <IconButton $w={38} $h={21} $on aria-label="Normal view">
      <Icon w={13} h={13}><path d="M.5.500h12v12H.5zM.5 4.500h12M.5 8.500h12M4.500.500v12M8.500.500v12" stroke="#666" /></Icon>
    </IconButton>
    <IconButton $w={38} $h={21} aria-label="Page layout view">
      <Icon w={13} h={13}><path d="M.5.500h12v12H.5zM3.500 2.500h6v8h-6zM5 4.500h3M5 6.500h3M5 8.500h3" stroke="#666" /></Icon>
    </IconButton>
    <IconButton $w={38} $h={21} aria-label="Page break view">
      <Icon w={13} h={13}><path d="M.5.500h12v12H.5zM4.500.500v6M8.500.500v6M.5 6.500h8" stroke="#666" /></Icon>
    </IconButton>
    <IconButton $w={16} aria-label="Zoom out">
      <Icon w={7} h={7}><path d="M0 3.500h7" stroke="#555" strokeWidth="2" /></Icon>
    </IconButton>
    <Slider type="range" aria-label="Zoom" min={0} max={100} defaultValue={50} />
    <IconButton $w={16} aria-label="Zoom in">
      <Icon w={7} h={7}><path d="M0 3.500h7M3.500 0v7" stroke="#555" strokeWidth="2" /></Icon>
    </IconButton>
    <ZoomValue>100%</ZoomValue>
  </Status>
);

/* ---------- taskbar ---------- */

const TaskBar = styled.footer`
  display: flex;
  flex: none;
  height: 40px;
  background: #042611;
`;

const TaskButton = styled.button<{ $w: number; $open?: boolean; $on?: boolean }>`
  ${plain}
  flex: none;
  width: ${(p) => p.$w}px;
  background: ${(p) => (p.$on ? "#3e5f4b" : "none")};
  box-shadow: ${(p) => (p.$open ? "inset 0 -2px #86b9e6" : "none")};
`;

const Search = styled.label`
  display: flex;
  align-items: center;
  flex: none;
  gap: 3px;
  width: 344px;
  padding: 0 14px 0 9px;
  background: #f3f3f3;
`;

const SearchInput = styled(PlainInput)`
  font-size: 14px;
  &::placeholder { color: #555; opacity: 1; }
`;

const Edge = styled.i`
  width: 1px;
  margin-left: 8px;
  margin-right: 4px;
  background: #5f7a69;
`;

const Gap = styled.i`
  width: 5px;
`;

const Taskbar = () => (
  <TaskBar>
    <TaskButton $w={48} aria-label="Start">
      <Icon w={16} h={16}>
        <path d="M0 2.300L6.500 1.400v6.200H0zM7.300 1.300L16 0v7.600H7.300zM0 8.400h6.500v6.200L0 13.700zM7.300 8.400H16V16l-8.700-1.300z" fill="#fff" />
      </Icon>
    </TaskButton>
    <Search>
      <Icon w={22} h={22}><circle cx="11" cy="11" r="9" stroke="#111" strokeWidth="3" /></Icon>
      <SearchInput aria-label="Search" placeholder="Type here to search" />
      <Icon w={14} h={18}>
        <rect x="4.500" y=".5" width="5" height="10" rx="1.500" stroke="#444" strokeWidth="1.200" />
        <path d="M1.500 7.500v4c0 1.500 1 2 2 2h7c1 0 2-.5 2-2v-4M7 13.500v3M4 16.500h6" stroke="#444" strokeWidth="1.200" />
      </Icon>
    </Search>
    <TaskButton $w={50} aria-label="Task view">
      <Icon w={20} h={14}>
        <path d="M4.500.500h11v13h-11zM3 2.500H.5v9H3M17 2.500h2.500v9H17" stroke="#fff" strokeWidth="1.200" />
      </Icon>
    </TaskButton>
    <Gap />
    <TaskButton $w={40} $open aria-label="Chrome">
      <Icon w={22} h={22}>
        <circle cx="11" cy="11" r="11" fill="#fbd04b" />
        <path d="M11 11L1.500 5.500A11 11 0 0120.500 5.500H11z" fill="#e0453a" />
        <path d="M1.500 5.500A11 11 0 0011 22l4.700-8.200L11 11 6.200 13.700z" fill="#28a453" />
        <circle cx="11" cy="11" r="5" fill="#fff" />
        <circle cx="11" cy="11" r="4" fill="#4b87ee" />
      </Icon>
    </TaskButton>
    <Gap />
    <TaskButton $w={50} aria-label="Edge">
      <Icon w={20} h={21}>
        <path
          d="M0 9.500C1 3.500 5 0 10.500 0 17 0 20 5 20 10v2H6.500c.3 4 3 5.200 6 5.200 2.300 0 4.300-.7 6-1.700v4c-2 1-4 1.500-6.500 1.500-5.500 0-9-3.500-9-8 0-3.500 2-6.500 5-8C4.500 5.500 2 7 0 9.500zm6.500-1.300h7.800c0-2.500-1.300-4-3.700-4s-3.700 1.700-4.100 4z"
          fill="#1d83dc"
        />
      </Icon>
    </TaskButton>
    <TaskButton $w={48} aria-label="File Explorer">
      <Icon w={22} h={20}>
        <path d="M0 1h8l2 2h12v15H0z" fill="#f7d775" />
        <path d="M1 4h20v14H1z" fill="#fde9a3" />
        <path d="M4 18v-7h14v7h-4v-4H8v4z" fill="#3fb8dc" />
      </Icon>
    </TaskButton>
    <TaskButton $w={48} $open $on aria-label="Excel">
      <Icon w={22} h={20}>
        <path d="M12 2.500h9.500v15H12zM12 5.500h9M12 8.500h9M12 11.500h9M12 14.500h9M17 3v14" stroke="#fff" fill="#2a7a4c" />
        <path d="M0 2l13-2v20L0 18z" fill="#1d7a45" />
        <path d="M4 6.500l5 7M9 6.500l-5 7" stroke="#fff" strokeWidth="1.800" />
      </Icon>
    </TaskButton>
    <Spacer />
    <TaskButton $w={48} aria-label="People">
      <Icon w={16} h={16}>
        <circle cx="5" cy="8" r="2.500" stroke="#fff" strokeWidth="1.300" />
        <path d="M1 15c0-5 8-5 8 0" stroke="#fff" strokeWidth="1.300" />
        <circle cx="11" cy="3.500" r="2.500" stroke="#fff" strokeWidth="1.300" />
        <path d="M8.500 8c2-3 6-1.500 6 2" stroke="#fff" strokeWidth="1.300" />
      </Icon>
    </TaskButton>
    <TaskButton $w={24} aria-label="Hidden icons">
      <Icon w={12} h={7}><path d="M.5 6.500L6 1l5.500 5.500" stroke="#fff" strokeWidth="1.400" /></Icon>
    </TaskButton>
    <TaskButton $w={24} aria-label="Network">
      <Icon w={16} h={14}>
        <path d="M4 2.500h11.500v7.500h-11M9.500 10v3M6 13.500h7M2.500 6v7.500" stroke="#fff" strokeWidth="1.200" />
        <path d="M.5 1.500h4v4h-4z" stroke="#fff" fill="#042611" />
      </Icon>
    </TaskButton>
    <TaskButton $w={24} aria-label="Volume">
      <Icon w={16} h={14}>
        <path d="M.5 4.500H3l3.500-3v11L3 9.500H.5z" stroke="#fff" />
        <path d="M8.500 4.500c1 1.500 1 3.500 0 5M10.800 2.800c2 2.500 2 6 0 8.500M13 1c2.800 3.500 2.800 8.500 0 12" stroke="#fff" />
      </Icon>
    </TaskButton>
    <TaskButton $w={40} aria-label="Notifications">
      <Icon w={16} h={16}><path d="M.5.500h15v12h-5L8 15l-2.500-2.500h-5z" stroke="#fff" strokeWidth="1.300" /></Icon>
    </TaskButton>
    <Edge />
  </TaskBar>
);

/* ---------- floating toolbar, menu and pointer ---------- */

const MiniBar = styled.div`
  position: absolute;
  left: 320px;
  top: 273px;
  display: flex;
  flex-direction: column;
  gap: 2px;
  width: 262px;
  padding: 4px 3px;
  border: 1px solid #c9c9c9;
  background: #fff;
  box-shadow: 2px 2px 3px rgba(0, 0, 0, 0.2);
`;

const Menu = styled.div`
  position: absolute;
  left: 320px;
  top: 344px;
  width: 146px;
  padding: 1px;
  border: 1px solid #c9c9c9;
  background: #fff;
  box-shadow: 2px 2px 3px rgba(0, 0, 0, 0.25);
`;

const MenuItem = styled.button<{ $on?: boolean; $off?: boolean }>`
  display: grid;
  grid-template-columns: 32px 1fr;
  align-items: center;
  width: 100%;
  height: 24px;
  padding: 0;
  border: 0;
  text-align: left;
  white-space: nowrap;
  background: ${(p) => (p.$on ? "#c8c8c8" : "none")};
  color: ${(p) => (p.$on ? "#333" : p.$off ? "#b5b5b5" : "#666")};
`;

const MenuIcon = styled.span`
  padding-left: 4px;
`;

const MenuHead = styled.div`
  display: grid;
  grid-template-columns: 25px 1fr;
  align-items: center;
  height: 22px;
  color: #666;
  font-weight: 700;
`;

const MenuHeadText = styled.span`
  height: 22px;
  padding-left: 7px;
  line-height: 22px;
  background: #eee;
`;

const PasteChoice = styled.button`
  ${plain}
  justify-content: flex-start;
  width: 100%;
  height: 30px;
  padding-left: 30px;
`;

const MenuRule = styled.div`
  height: 2px;
  margin-left: 31px;
  border-top: 1px solid #e0e0e0;
`;

const Pointer = styled.div`
  position: absolute;
  left: 375px;
  top: 547px;
  pointer-events: none;
`;

const Floating = () => (
  <>
    <MiniBar>
      <Line>
        <Drop value="Calibri" w={64} label="Font" />
        <Drop value="11" w={47} label="Font size" />
        <IconButton $w={25} aria-label="Grow font"><GrowIcon /></IconButton>
        <IconButton $w={21} aria-label="Shrink font"><GrowIcon shrink /></IconButton>
        <IconButton $w={20} aria-label="Currency"><Sign>$</Sign></IconButton>
        <Arrow label="Currency options" />
        <IconButton $w={24} aria-label="Percent"><Sign>%</Sign></IconButton>
        <IconButton $w={20} aria-label="Comma style"><CommaIcon /></IconButton>
        <IconButton aria-label="Merge"><MergeIcon /></IconButton>
      </Line>
      <Line>
        <IconButton $w={20} aria-label="Bold"><Mark>B</Mark></IconButton>
        <IconButton aria-label="Italic"><Mark $italic>I</Mark></IconButton>
        <IconButton aria-label="Center"><LinesIcon ys={[1, 4, 7, 10]} kind="center" /></IconButton>
        <IconButton $w={24} aria-label="Fill color"><FillIcon /></IconButton>
        <Arrow w={10} label="Fill options" />
        <IconButton $w={24} aria-label="Font color"><FontColorIcon /></IconButton>
        <Arrow w={10} label="Font color options" />
        <IconButton $w={24} aria-label="Borders"><BordersIcon /></IconButton>
        <Arrow w={10} label="Border options" />
        <IconButton $w={24} aria-label="Increase decimal"><DecimalIcon /></IconButton>
        <IconButton aria-label="Decrease decimal"><DecimalIcon less /></IconButton>
        <IconButton aria-label="Format painter"><BrushIcon /></IconButton>
      </Line>
    </MiniBar>
    <Menu role="menu">
      <MenuItem role="menuitem"><MenuIcon><CutIcon /></MenuIcon><span>Cu<u>t</u></span></MenuItem>
      <MenuItem role="menuitem"><MenuIcon><CopyIcon /></MenuIcon><span><u>C</u>opy</span></MenuItem>
      <MenuHead>
        <MenuIcon><PasteIcon w={15} h={16} /></MenuIcon>
        <MenuHeadText>Paste Options:</MenuHeadText>
      </MenuHead>
      <PasteChoice role="menuitem" aria-label="Paste"><PasteIcon w={22} h={24} /></PasteChoice>
      <MenuItem role="menuitem" $off><MenuIcon /><span>Paste <u>S</u>pecial...</span></MenuItem>
      <MenuRule />
      <MenuItem role="menuitem"><MenuIcon /><span><u>I</u>nsert</span></MenuItem>
      <MenuItem role="menuitem"><MenuIcon /><span><u>D</u>elete</span></MenuItem>
      <MenuItem role="menuitem" $on><MenuIcon /><span>Clear Co<u>n</u>tents</span></MenuItem>
      <MenuRule />
      <MenuItem role="menuitem">
        <MenuIcon>
          <Icon w={14} h={16}>
            <path d="M.5.500h13v15H.5z" fill="#fff" stroke="#777" />
            <path d="M0 0h14v3H0z" fill="#5583ad" />
            <path d="M3 6h2v2H3zM3 10h2v2H3z" stroke="#666" strokeWidth=".8" />
            <path d="M7 7.500h4M7 11.500h4" stroke="#666" />
          </Icon>
        </MenuIcon>
        <span><u>F</u>ormat Cells...</span>
      </MenuItem>
      <MenuItem role="menuitem"><MenuIcon /><span>Column <u>W</u>idth...</span></MenuItem>
      <MenuItem role="menuitem"><MenuIcon /><span><u>H</u>ide</span></MenuItem>
      <MenuItem role="menuitem"><MenuIcon /><span><u>U</u>nhide</span></MenuItem>
    </Menu>
    <Pointer>
      <Icon w={12} h={19}>
        <path d="M.7 1v15l3.500-3.300L6.500 18l2.300-1-2.200-5H11z" fill="#fff" stroke="#000" />
      </Icon>
    </Pointer>
  </>
);

export default function App() {
  return (
    <Window>
      <Global />
      <Header />
      <Ribbon />
      <Formula />
      <Grid />
      <Tabs />
      <StatusBar />
      <Taskbar />
      <Floating />
    </Window>
  );
}
